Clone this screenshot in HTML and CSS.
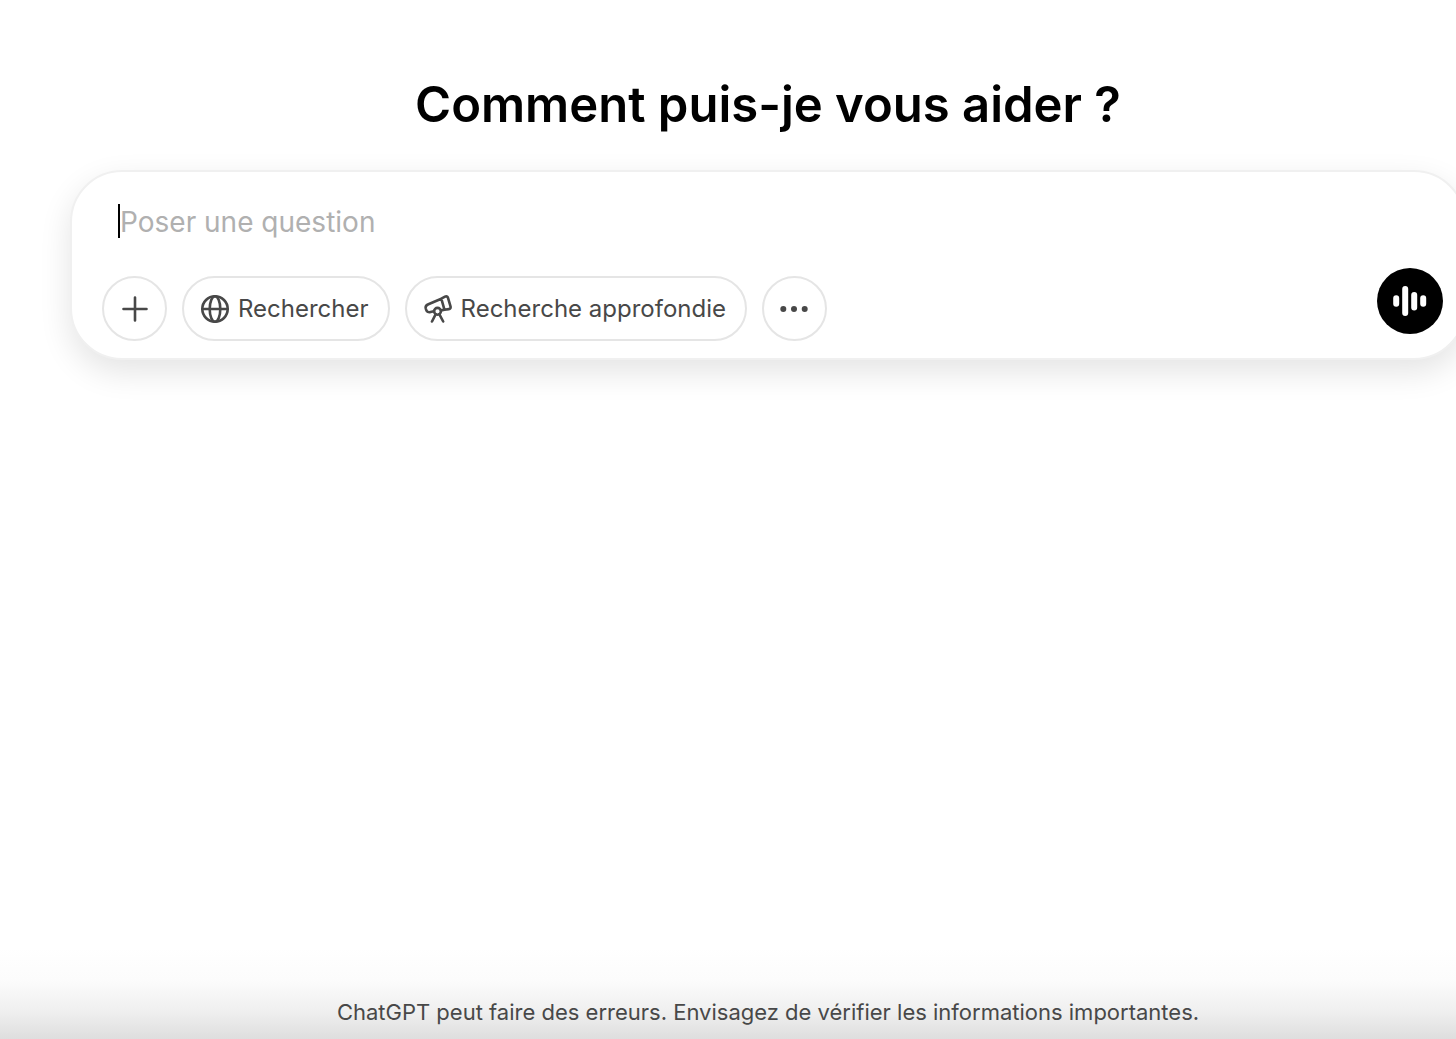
FILE: index.html
```html
<!DOCTYPE html>
<html lang="fr">
<head>
<meta charset="utf-8">
<meta name="viewport" content="width=device-width, initial-scale=1">
<title>ChatGPT</title>
<link rel="stylesheet" href="styles.css">
</head>
<body>
<main class="page">
  <h1 class="title">Comment puis-je vous aider ?</h1>
  <form class="composer">
    <div class="prompt">
      <span class="caret"></span>
      <input class="prompt-input" type="text" placeholder="Poser une question" aria-label="Poser une question">
    </div>
    <div class="toolbar">
      <div class="tools">
        <button class="chip round" type="button" aria-label="Ajouter">
          <svg class="icon" viewBox="0 0 28 28"><path d="M14 2.500v23M2.500 14h23"/></svg>
        </button>
        <button class="chip" type="button">
          <svg class="icon" viewBox="0 0 28 28"><circle cx="14" cy="14" r="12.7"/><ellipse cx="14" cy="14" rx="5.3" ry="12.7"/><path d="M1.5 14h25"/></svg>
          Rechercher
        </button>
        <button class="chip" type="button">
          <svg class="icon" viewBox="0 0 28 28"><path d="M17.300 3.700 21 1.700c1.400-.700 2.600-.200 3 1.200l2.500 8.500c.4 1.500-.3 2.500-1.700 2.700l-4.300.7zM17.300 3.700 4.400 9.200C2.200 10.100 1.200 11.600 1.800 13.600l.4 1.200c.6 2.100 2.300 2.900 4.300 2.300l3.400-.9M20.500 14.800l-3.500.6"/><circle cx="13.500" cy="16.300" r="3.400"/><path d="M11.600 19.400 8 26.500M15.400 19.400 19.200 26.500"/></svg>
          Recherche approfondie
        </button>
        <button class="chip round" type="button" aria-label="Plus">
          <svg class="icon dots" viewBox="0 0 28 28"><circle cx="3.300" cy="14" r="3"/><circle cx="14" cy="14" r="3"/><circle cx="24.700" cy="14" r="3"/></svg>
        </button>
      </div>
      <button class="voice" type="button" aria-label="Mode vocal">
        <svg class="voice-icon" viewBox="0 0 34 34"><path d="M3.200 14.200v5.600M12.200 5v24M21.200 11v12.500M30.200 14.200v5.600"/></svg>
      </button>
    </div>
  </form>
</main>
<footer class="footer">
  <p class="notice">ChatGPT peut faire des erreurs. Envisagez de vérifier les informations importantes.</p>
</footer>
</body>
</html>
```
FILE: styles.css
```css
* {
  box-sizing: border-box;
}

body {
  margin: 0;
  min-height: 100vh;
  display: flex;
  flex-direction: column;
  overflow: hidden;
  background: #fff;
  color: #000;
  font-family: Inter, "Liberation Sans", sans-serif;
}

button,
input {
  font: inherit;
}

.page {
  flex: 1;
  margin: 0 -10px 0 70px;
  padding-top: 73px;
}

.title {
  margin: 0 0 33px;
  font-size: 49px;
  line-height: 64px;
  font-weight: 600;
  text-align: center;
}

.composer {
  padding: 32px 21px 17px 30px;
  border: 2px solid #f0f0f0;
  border-radius: 52px;
  background: #fff;
  box-shadow: 0 12px 32px rgba(0, 0, 0, 0.11);
}

.prompt {
  display: flex;
  margin: 0 16px 30px;
}

.caret {
  width: 2px;
  height: 34px;
  background: #000;
}

.prompt-input {
  flex: 1;
  min-width: 0;
  height: 34px;
  padding: 2px 0 0;
  border: 0;
  outline: 0;
  background: transparent;
  font-size: 28px;
}

.prompt-input::placeholder {
  color: #b0b0b0;
  opacity: 1;
}

.toolbar {
  display: flex;
  justify-content: space-between;
  align-items: flex-start;
}

.tools {
  display: flex;
  gap: 15px;
  padding-top: 8px;
}

.chip {
  display: flex;
  align-items: center;
  gap: 9px;
  height: 65px;
  padding: 0 19px 0 17px;
  border: 2px solid #e5e5e5;
  border-radius: 33px;
  background: #fff;
  color: #484848;
  font-size: 24px;
  font-weight: 400;
  white-space: nowrap;
}

.round {
  width: 65px;
  padding: 0;
  justify-content: center;
}

.icon {
  flex: none;
  width: 28px;
  height: 28px;
  fill: none;
  stroke: currentColor;
  stroke-width: 2.6;
  stroke-linecap: round;
  stroke-linejoin: round;
}

.dots {
  fill: currentColor;
  stroke: none;
}

.voice {
  display: flex;
  align-items: center;
  justify-content: center;
  width: 66px;
  height: 66px;
  padding: 0;
  border: 0;
  border-radius: 50%;
  background: #000;
}

.voice-icon {
  width: 34px;
  height: 34px;
  fill: none;
  stroke: #fff;
  stroke-width: 6;
  stroke-linecap: round;
}

.footer {
  padding: 48px 0 11px 80px;
  background: linear-gradient(#fff, #fcfcfc 35%, #efefef 70%, #dedede);
}

.notice {
  margin: 0;
  color: #484848;
  font-size: 22px;
  line-height: 32px;
  text-align: center;
}
```
